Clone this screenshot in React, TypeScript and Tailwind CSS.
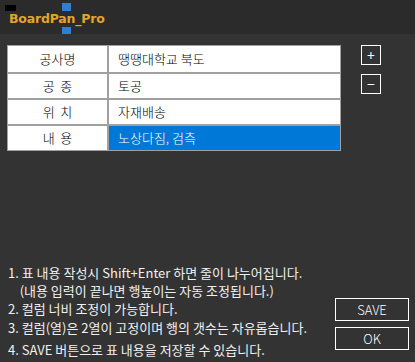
const rows = [
  { label: "공사명", value: "땡땡대학교 북도" },
  { label: "공  종", value: "토공" },
  { label: "위  치", value: "자재배송" },
  { label: "내  용", value: "노상다짐, 검측", selected: true },
];

const notes = [
  "1. 표 내용 작성시 Shift+Enter 하면 줄이 나누어집니다.",
  "    (내용 입력이 끝나면 행높이는 자동 조정됩니다.)",
];

export default function App() {
  const font = { fontFamily: '"Noto Sans CJK KR", "Noto Sans", sans-serif' };

  return (
    <div className="h-[362px] w-[415px] overflow-hidden bg-[#333333] text-white" style={font}>
      {/* 상단 타이틀 */}
      <div className="relative h-[34px] bg-[#2b2b2b]">
        <div className="absolute left-[5px] top-[5px] h-[6px] w-[11px] bg-black" />
        <div className="absolute left-[62px] top-[3px] h-[8px] w-[9px] bg-[#2e7fd6]" />
        <div className="absolute left-[62px] top-[27px] h-[7px] w-[9px] bg-[#2e7fd6]" />
        <div
          className="absolute left-[9px] top-[11px] text-[12.5px] font-bold leading-[16px] text-[#e2a52a]"
          style={{ fontFamily: '"DejaVu Sans", sans-serif', letterSpacing: "-0.2px" }}
        >
          BoardPan_Pro
        </div>
      </div>

      <div className="flex pl-[7px] pt-[11px]">
        {/* 표 */}
        <div className="w-[334px] border border-[#a0a0a0] bg-white">
          {rows.map((r, i) => (
            <div
              key={i}
              className={`flex h-[26px] ${i > 0 ? "border-t-2 border-[#a0a0a0]" : "h-[25px]"}`}
            >
              <div className="flex w-[99px] items-center justify-center whitespace-pre text-[13px] font-light text-black">
                {r.label}
              </div>
              <div
                className={`flex flex-1 items-center border-l-2 border-[#a0a0a0] pl-[9px] text-[13px] font-light ${
                  r.selected ? "bg-[#0078d7] text-white" : "text-black"
                }`}
              >
                {r.value}
              </div>
            </div>
          ))}
        </div>

        {/* +/- 버튼 */}
        <div className="ml-[20px] flex flex-col gap-[9px]">
          <button className="flex h-[20px] w-[20px] items-center justify-center border border-white text-[14px] leading-none">
            +
          </button>
          <button className="flex h-[20px] w-[20px] items-center justify-center border border-white text-[14px] leading-none">
            −
          </button>
        </div>
      </div>

      {/* 하단 안내 + 버튼 */}
      <div className="mt-[113px] flex">
        <div className="w-[335px] whitespace-nowrap pl-[8px] text-[13px] leading-[18px] text-[#f0f0f0]">
          {notes.map((n, i) => (
            <div key={i} className="whitespace-pre">
              {n}
            </div>
          ))}
          <div>2. 컬럼 너비 조정이 가능합니다.</div>
          <div className="mt-[1px]">3. 컬럼(열)은 2열이 고정이며 행의 갯수는 자유롭습니다.</div>
          <div className="mt-[4px]">4. SAVE 버튼으로 표 내용을 저장할 수 있습니다.</div>
        </div>
        <div className="flex flex-col gap-[6px] pt-[34px]">
          <button className="h-[23px] w-[74px] border border-white text-[13px] font-light leading-none">
            SAVE
          </button>
          <button className="h-[23px] w-[74px] border border-white text-[13px] font-light leading-none">
            OK
          </button>
        </div>
      </div>
    </div>
  );
}
